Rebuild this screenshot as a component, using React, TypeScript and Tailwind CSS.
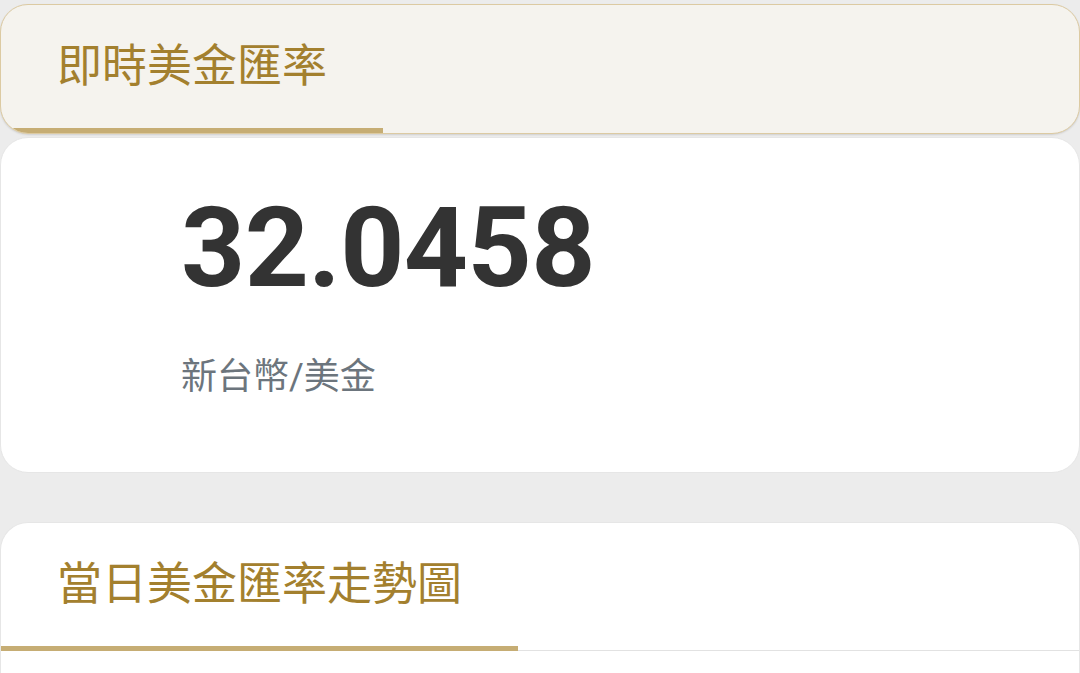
const FONT = 'font-["Roboto","Noto_Sans_CJK_TC",sans-serif]';

function CardTitle({ children }: { children: React.ReactNode }) {
  return (
    <div className="border-b border-[#e2e2e2]">
      <h2 className="inline-flex h-[128px] items-center border-b-[5px] border-[#c6ad74] pl-[56px] pr-[56px] -mb-px text-[45px] leading-none font-normal text-[#a3802e]">
        {children}
      </h2>
    </div>
  );
}

export default function App() {
  return (
    <div className={`min-h-screen bg-[#ececec] pt-[4px] ${FONT}`}>
      {/* 即時匯率 header */}
      <section className="overflow-hidden rounded-[28px] border border-[#dccaa2] bg-[#f5f3ee] shadow-[0_1px_2px_rgba(0,0,0,0.12)]">
        <h2 className="inline-flex h-[128px] items-center border-b-[5px] border-[#c6ad74] pl-[56px] pr-[56px] text-[45px] leading-none font-normal text-[#a3802e]">
          即時美金匯率
        </h2>
      </section>

      {/* 匯率數字 */}
      <section className="mt-[3px] h-[336px] rounded-[28px] border border-[#e6e6e6] bg-white px-[180px] pt-[54px]">
        <div className="text-[112px] leading-none font-bold tracking-[-0.6px] text-[#333333]">32.0458</div>
        <div className="mt-[55px] text-[36px] leading-none text-[#6c757d]">新台幣/美金</div>
      </section>

      {/* 走勢圖 */}
      <section className="mt-[49px] overflow-hidden rounded-t-[28px] border border-b-0 border-[#e6e6e6] bg-white">
        <CardTitle>當日美金匯率走勢圖</CardTitle>
        <div className="h-[200px]" />
      </section>
    </div>
  );
}
